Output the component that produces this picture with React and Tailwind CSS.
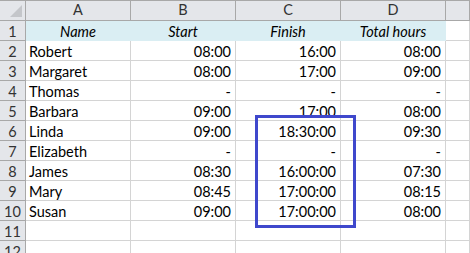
import React from "react";

const rows = [
  ["Robert", "08:00", "16:00", "08:00"],
  ["Margaret", "08:00", "17:00", "09:00"],
  ["Thomas", "-", "-", "-"],
  ["Barbara", "09:00", "17:00", "08:00"],
  ["Linda", "09:00", "18:30:00", "09:30"],
  ["Elizabeth", "-", "-", "-"],
  ["James", "08:30", "16:00:00", "07:30"],
  ["Mary", "08:45", "17:00:00", "08:15"],
  ["Susan", "09:00", "17:00:00", "08:00"],
  ["", "", "", ""],
  ["", "", "", ""],
];

const cols = "grid grid-cols-[26px_105px_105px_105px_105px_1fr]";

function App() {
  return (
    <div
      className="relative w-[470px] h-[253px] overflow-hidden bg-white text-black"
      style={{ fontFamily: "Lato, 'Open Sans', sans-serif" }}
    >
      {/* column headers */}
      <div className={`${cols} h-[21px] bg-[#e4e6ea] border-t border-[#a8a8a8] text-[14.5px] text-[#333]`}>
        <div className="relative border-r border-b border-[#a8a8a8]">
          <div className="absolute right-[3px] bottom-[3px] w-0 h-0 border-l-[12px] border-l-transparent border-b-[12px] border-b-[#c4c6ca]" />
        </div>
        {["A", "B", "C", "D", ""].map((c, i) => (
          <div
            key={i}
            className="flex items-center justify-center leading-none border-r border-b border-[#a8a8a8]"
          >
            {c}
          </div>
        ))}
      </div>

      {/* row 1 */}
      <div className={`${cols} h-[20px] text-[14.5px]`}>
        <div className="flex items-end justify-center pb-[1px] leading-none bg-[#e4e6ea] border-r border-b border-[#a8a8a8] text-[#333]">
          1
        </div>
        {["Name", "Start", "Finish", "Total hours"].map((h) => (
          <div
            key={h}
            className="flex items-end justify-center pb-[1px] leading-none italic bg-[#daeef3] border-r border-b border-[#daeef3]"
          >
            {h}
          </div>
        ))}
        <div className="border-r border-b border-[#d4d4d4]" />
      </div>

      {rows.map((r, i) => (
        <div key={i} className={`${cols} h-[20px] text-[14.5px]`}>
          <div className="flex items-end justify-center pb-[1px] leading-none bg-[#e4e6ea] border-r border-b border-[#a8a8a8] text-[#333]">
            {i + 2}
          </div>
          <div className="flex items-end pl-[3px] pb-[1px] leading-none border-r border-b border-[#d4d4d4]">
            {r[0]}
          </div>
          {r.slice(1).map((v, j) => (
            <div
              key={j}
              className="flex items-end justify-end pr-[4px] pb-[1px] leading-none border-r border-b border-[#d4d4d4]"
            >
              {v}
            </div>
          ))}
          <div className="border-r border-b border-[#d4d4d4]" />
        </div>
      ))}

      {/* highlight box */}
      <div className="absolute left-[255px] top-[115px] w-[101px] h-[113px] border-[3px] border-[#3f48cc]" />
    </div>
  );
}

export default App;
